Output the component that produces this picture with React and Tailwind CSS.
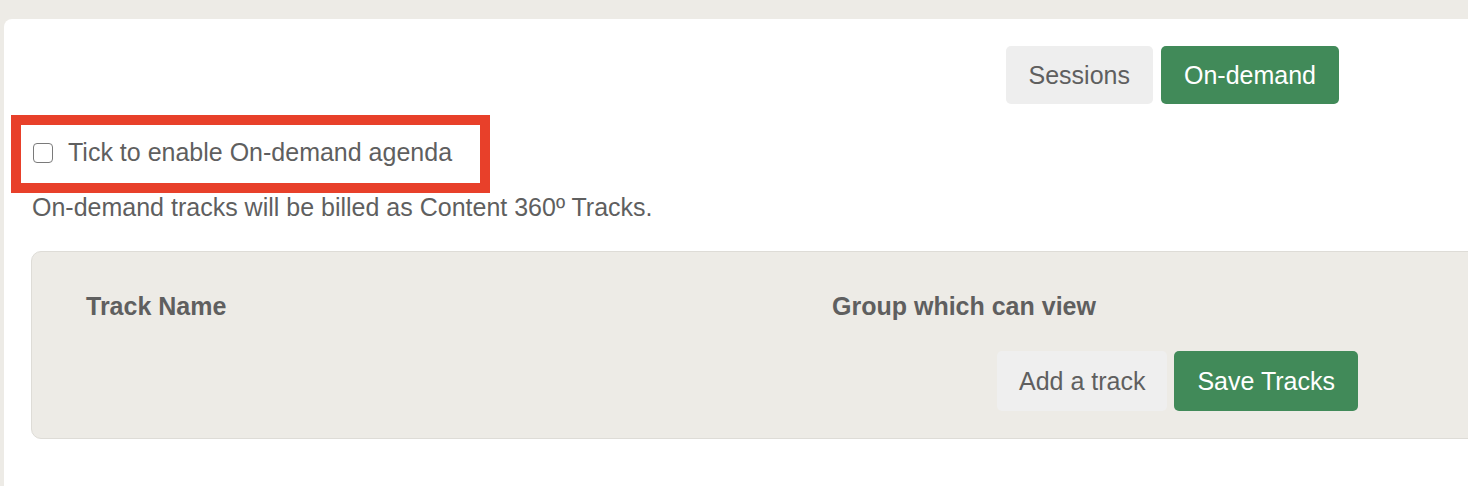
export default function App() {
  const font = { fontFamily: '"Liberation Sans", Arial, sans-serif' };
  return (
    <div className="h-[486px] w-[1468px] overflow-hidden bg-[#edebe6] pt-[19px] pl-[4px]" style={font}>
      <div className="h-[480px] w-[1520px] rounded-[8px] bg-white pl-[28px] text-[25px] leading-[29px] text-[#5f5f5f]">
        <div className="flex w-[1307px] justify-end gap-[8px] pt-[27px]">
          <button className="h-[58px] rounded-[5px] bg-[#eeeeee] px-[23px] text-[25px] text-[#5f5f5f]">Sessions</button>
          <button className="h-[58px] rounded-[5px] bg-[#418a59] px-[23px] text-[25px] text-white">On-demand</button>
        </div>
        <div className="relative mt-[34px] flex h-[29px] items-center">
          <span className="absolute left-[-21px] top-[-23px] h-[78px] w-[479px] border-[10px] border-[#e8402a]"></span>
          <span className="relative ml-px mr-[15px] h-[20px] w-[20px] rounded-[4px] border-[1.5px] border-[#7a7a7a] bg-white"></span>
          <span className="relative">Tick to enable On-demand agenda</span>
        </div>
        <p className="mt-[26px] leading-[28px]">On-demand tracks will be billed as Content 360º Tracks.</p>
        <div className="-ml-px mt-[30px] h-[188px] rounded-[10px] border border-[#dedcd7] bg-[#edebe6] pl-[54px] pt-[40px]">
          <div className="grid grid-cols-[746px_1fr] font-bold">
            <div>Track Name</div>
            <div>Group which can view</div>
          </div>
          <div className="mt-[30px] flex w-[1272px] justify-end gap-[7px]">
            <button className="h-[60px] rounded-[5px] bg-[#efefef] px-[22px] text-[25px] text-[#5f5f5f]">Add a track</button>
            <button className="h-[60px] rounded-[5px] bg-[#418a59] px-[23px] text-[25px] text-white">Save Tracks</button>
          </div>
        </div>
      </div>
    </div>
  );
}
